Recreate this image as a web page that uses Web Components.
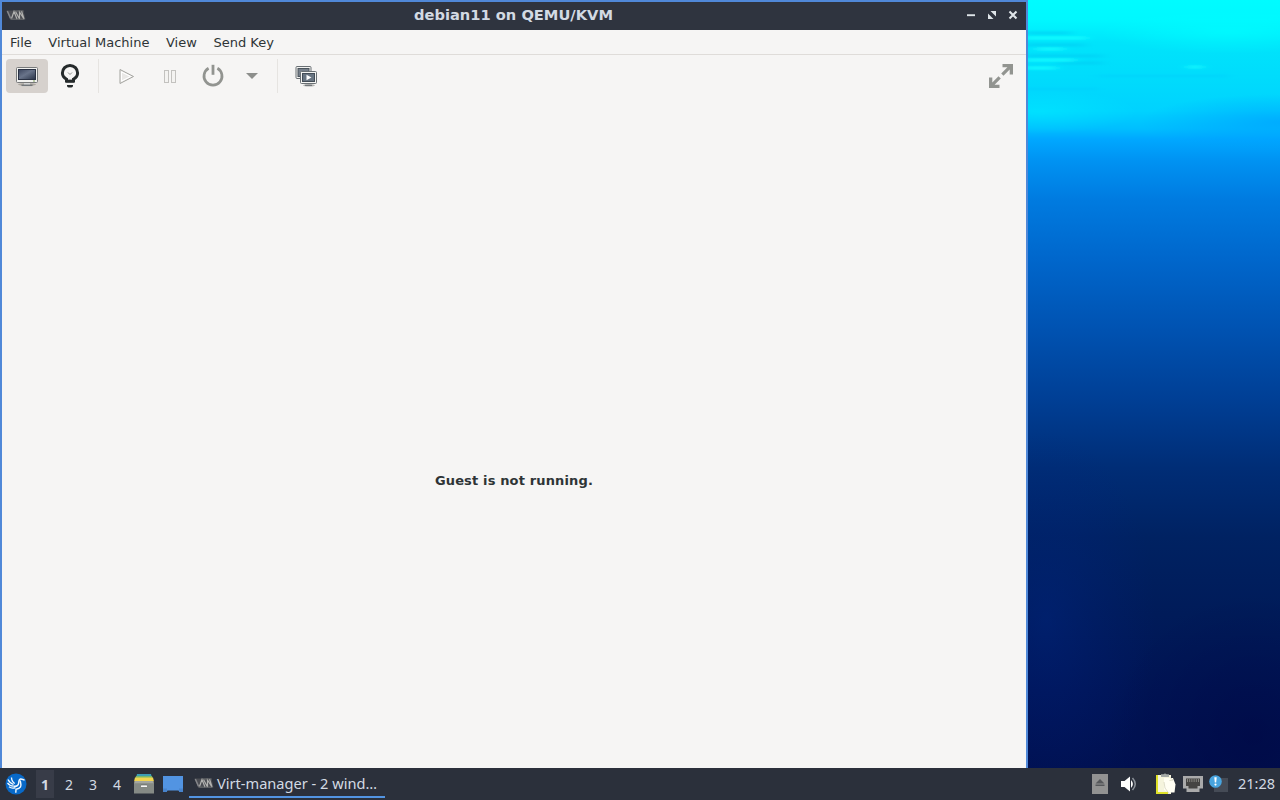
<!DOCTYPE html>
<html lang="en">
<head>
<meta charset="utf-8">
<title>debian11 on QEMU/KVM</title>
<style>
    html, body{
        margin: 0;
        width: 100%;
        height: 100%;
        overflow: hidden;
        font-family: "DejaVu Sans", sans-serif;
    }
</style>
</head>
<body>
<app-desktop>
    <app-window slot="window" label="debian11 on QEMU/KVM">
        <menu-bar slot="menu">
            <menu-item>File</menu-item>
            <menu-item>Virtual Machine</menu-item>
            <menu-item>View</menu-item>
            <menu-item>Send Key</menu-item>
        </menu-bar>
        <tool-bar slot="tools">
            <tool-button active style="--w:42px"><ui-icon name="monitor"></ui-icon></tool-button>
            <tool-button style="--w:44px"><ui-icon name="bulb"></ui-icon></tool-button>
            <tool-divider></tool-divider>
            <tool-button style="--w:44px"><ui-icon name="play"></ui-icon></tool-button>
            <tool-button style="--w:42px"><ui-icon name="pause"></ui-icon></tool-button>
            <tool-button style="--w:44px"><ui-icon name="power"></ui-icon></tool-button>
            <tool-button style="--w:34px"><ui-icon name="down"></ui-icon></tool-button>
            <tool-divider style="margin-left:8px"></tool-divider>
            <tool-button style="--w:44px"><ui-icon name="snapshots"></ui-icon></tool-button>
            <tool-button slot="end" style="--w:42px"><ui-icon name="expand"></ui-icon></tool-button>
        </tool-bar>
        <guest-status>Guest is not running.</guest-status>
    </app-window>
    <wall-paper slot="wallpaper"></wall-paper>
    <task-bar slot="panel"></task-bar>
</app-desktop>

<script>
const icons = {
    virt: [20, 12, `
        <path d="M.5 1.500h17l2 9H4.300z" fill="#4a4c52"/>
        <path d="M1.300 2 4.600 9.500" fill="none" stroke="#85868a" stroke-width="1.500"/>
        <path d="M5.500 9.500 8 2.500l3 7.500M9.500 2.500l4 7.500V3l4.500 7M15.500 2l2.500 8" fill="none" stroke="#b2b2b0" stroke-width="1.200"/>
        <path d="M8 2h9.500M4.500 10.200h14" stroke="#77787a" stroke-width=".8"/>`],
    monitor: [24, 24, `
        <defs><linearGradient id="scr" x2="1" y2="1"><stop stop-color="#3c465e"/><stop offset=".45" stop-color="#69748a"/><stop offset="1" stop-color="#283246"/></linearGradient></defs>
        <ellipse cx="12" cy="20.500" rx="9" ry="1.400" fill="#aaa69f"/>
        <rect x="1.500" y="3.500" width="21" height="15" rx="1" fill="#f1f1ef" stroke="#77797a"/>
        <rect x="3.500" y="5.500" width="17" height="10" fill="url(#scr)" stroke="#293143"/>
        <path d="M9 19h6v2H9z" fill="#d4d5d5"/><path d="M6.500 21.300h11" stroke="#73777b" stroke-width="1.500"/>
        <path d="M18 17h2" stroke="#7c9c5a"/>`],
    bulb: [24, 26, `
        <path d="M8.500 17.700v-1.500C6 14.700 4.400 12.700 4.400 10a7.600 7.600 0 0 1 15.200 0c0 2.700-1.600 4.700-4.100 6.200v1.500z" fill="none" stroke="#252a2b" stroke-width="3"/>
        <path d="m10 9.500 2 2 2-2" fill="none" stroke="#8b8d8b" stroke-width="1"/><path d="M10 14.500h4v2h-4z" fill="#f6f5f4"/>
        <path d="M7.500 18h9v1.700h-9zM9 22h6v.7q0 1.800-1.600 1.800h-2.800Q9 24.500 9 22.700z" fill="#252a2b"/>`],
    play: [24, 24, `
        <path d="m5 5.500 13.500 7L5 19.500z" fill="#f4f3f1" stroke="#a3a39f" stroke-linejoin="round"/>
        <path d="m6.500 8 9 4.500-9 4.500z" fill="#e9e8e6" stroke="#fff"/>`],
    pause: [24, 24, `
        <rect x="6.500" y="6.500" width="4" height="12" fill="#f4f3f1" stroke="#c3c2bf"/><rect x="13.500" y="6.500" width="4" height="12" fill="#f4f3f1" stroke="#c3c2bf"/>`],
    power: [24, 24, `
        <path d="M7.600 4.200a9 9 0 1 0 8.800 0" fill="none" stroke="#929490" stroke-width="2.700"/>
        <path d="M12 .8v10" stroke="#929490" stroke-width="2.800"/>`],
    down: [14, 8, `<path d="M1 1h12L7 7z" fill="#8d8f8c"/>`],
    snapshots: [24, 24, `
        <ellipse cx="15" cy="21.300" rx="6" ry="1.300" fill="#b3b4b2"/>
        <rect x="2" y="2.500" width="15" height="12" rx="1" fill="#f2f2f0" stroke="#6a7074"/>
        <rect x="4" y="4.500" width="11" height="8" fill="#77808b" stroke="#4c555d"/>
        <rect x="6.500" y="7.500" width="16" height="12" rx="1" fill="#f5f5f3" stroke="#6a7074"/>
        <rect x="8.500" y="9.500" width="12" height="8" fill="#697582" stroke="#434d57"/>
        <path d="m12.500 10.800 5 2.700-5 2.700z" fill="#fff"/><path d="M11 21.300h7" stroke="#646b70"/>`],
    expand: [24, 24, `
        <path d="M13.500 0H24v10.500h-3.300V5.600l-6.200 6.200-2.300-2.300 6.200-6.200h-4.900zM10.500 24H0V13.500h3.300v4.900l6.200-6.200 2.300 2.300-6.200 6.200h4.900z" fill="#929490"/>`],
    minimize: [10, 10, `<path d="M1 5.200h8" stroke="#dfe5e9" stroke-width="1.900"/>`],
    maximize: [10, 10, `<path d="M3.500 1H9v5.500zM1 3.500V9h5.500z" fill="#dfe5e9"/>`],
    close: [10, 10, `<path d="m1.500 1.500 7 7m0-7-7 7" stroke="#dfe5e9" stroke-width="2.100"/>`],
    lubuntu: [22, 22, `
        <circle cx="11" cy="11" r="10.500" fill="#0869c8"/>
        <path d="M3 6.500C4 9 6 10.300 8.500 11.500M2.500 9.800c1.500 2.300 3.300 3.200 6 3.400M4 13.800c2 1.500 4 1.700 6.500.8M6.500 4.500c0 2.500 1 4.500 3.300 6" fill="none" stroke="#f5faff" stroke-width="1.300"/>
        <path d="M8.500 13c3 .8 5-.5 5.200-3 .2-2.200.2-3.800 1.800-4.100 1.500-.2 2.500.7 4 1.300" fill="none" stroke="#f5faff" stroke-width="1.500"/>
        <path d="M15.300 7.500c0 2.500 1.500 4 .2 6.300-1 1.800-2.700 2.200-4.500 2.500l-.2 3.500" fill="none" stroke="#f5faff" stroke-width="1.400"/>`],
    files: [22, 22, `
        <path d="M4 1h14l1 4H3z" fill="#3d9eb4"/><path d="M3 3h16l1 4H2z" fill="#79b86a"/><path d="M2 4.500h18l1 4H1z" fill="#f2d44f"/>
        <path d="M2 8h18l1 2v10.500H1V10z" fill="#858a85"/><path d="M2 8h18l.8 2.200H1.200z" fill="#a2a6a1"/>
        <rect x="7.500" y="12" width="7" height="2.500" rx="1" fill="#f6f6f4" stroke="#5b605b" stroke-width=".6"/>`],
    showdesk: [22, 18, `<path d="M1 1h20v16h-3.500l-1-1.500h-11l-1 1.500H1z" fill="#5294e2"/><path d="M1 13.500h4L4.500 17H1zm16 0h4V17h-3.500z" fill="#4783cc"/>`],
    eject: [16, 20, `<path d="M0 0h16v20H0z" fill="#929292"/><path d="m8 5 4.500 4.500h-9zM3.500 10.500h9V12h-9z" fill="#55575a"/>`],
    sound: [18, 18, `
        <path d="M1 6h3.500L10 1.500v15L4.500 12H1z" fill="#fff"/><path d="M11 5q3.800 4 0 8z" fill="#fff"/>
        <path d="M12.500 3q5.500 6 0 12" fill="none" stroke="#8b9198" stroke-width="1.500"/>`],
    clipboard: [22, 22, `
        <path d="M1 2h15v19H1z" fill="#f5f4dd"/><path d="M1 2h2v17H1zm0 17h12v2H1z" fill="#dfe128"/>
        <path d="M6 1.300h2.500Q10-.5 11.500 1.300H14V4H6z" fill="#a3a8a6"/>
        <path d="M9 5h9l2.500 6.500-1 8H14L9 17z" fill="#fffef3"/><path d="m15 4.500 3 2.500-3.500.5M9 9l1 6 4 5.500" fill="none" stroke="#d7d6bf" stroke-width=".8"/>`],
    network: [20, 18, `
        <path d="M0 1h20v12.500h-3.500V17h-13v-3.500H0z" fill="#aaaaaa"/><path d="M3 3.500h14V11h-2.500v2.500h-9V11H3z" fill="#454442"/>
        <path d="M4.500 4v3m2.200-3v3m2.200-3v3m2.200-3v3m2.200-3v3m2.200-3v3" stroke="#97968f" stroke-width=".8"/>`],
    notify: [20, 18, `
        <path d="M8 3h11v14H5v-5z" fill="#454b56"/><circle cx="6.500" cy="6.500" r="6.300" fill="#48a4df"/>
        <path d="M5.300 2.200h2.400l-.5 5.300H5.800z" fill="#fff"/><circle cx="6.500" cy="9.600" r="1.100" fill="#fff"/>`]
};

const define = (tag, html, setup) => {
    const template = document.createElement("template");
    template.innerHTML = html;
    customElements.define(tag, class extends HTMLElement{
        constructor(){
            super();
            this.attachShadow({mode: "open"});
            this.shadowRoot.appendChild(template.content.cloneNode(true));
        };
        connectedCallback(){
            if (setup) setup(this, this.shadowRoot);
        };
    });
};

define("ui-icon", `
    <style>
        :host{ display: inline-flex; flex: none; }
        svg{ display: block; }
    </style>
    <svg aria-hidden="true"></svg>
`, (el, root) => {
    const [w, h, body] = icons[el.getAttribute("name")];
    const svg = root.querySelector("svg");
    svg.setAttribute("viewBox", `0 0 ${w} ${h}`);
    svg.setAttribute("width", w);
    svg.setAttribute("height", h);
    svg.innerHTML = body;
});

define("app-desktop", `
    <style>
        :host{
            display: grid;
            grid-template-columns: 1028px minmax(0, 1fr);
            grid-template-rows: minmax(0, 1fr) 32px;
            width: 100vw;
            height: 100vh;
        }
        footer{ grid-column: 1 / -1; display: grid; }
        main, aside{ display: grid; min-width: 0; min-height: 0; }
    </style>
    <main><slot name="window"></slot></main>
    <aside><slot name="wallpaper"></slot></aside>
    <footer><slot name="panel"></slot></footer>
`);

define("app-window", `
    <style>
        :host{
            display: flex;
            flex-direction: column;
            box-sizing: border-box;
            border: 2px solid #5088d8;
            border-bottom: 0;
            background: #f6f5f4;
            color: #2e3436;
        }
        header{
            display: grid;
            grid-template-columns: 60px 1fr 61px;
            align-items: center;
            height: 28px;
            background: #2f343f;
            color: #d3dae3;
        }
        header > ui-icon{ padding: 0 0 2px 4px; }
        h1{
            margin: 0;
            font-size: 14.667px;
            line-height: 26px;
            text-align: center;
            padding-bottom: 2px;
            white-space: nowrap;
        }
        nav{ display: flex; gap: 11px; justify-content: flex-end; padding: 0 8px 2px 0; }
        section{ flex: 1; display: grid; }
    </style>
    <header>
        <ui-icon name="virt"></ui-icon>
        <h1></h1>
        <nav>
            <ui-icon name="minimize"></ui-icon>
            <ui-icon name="maximize"></ui-icon>
            <ui-icon name="close"></ui-icon>
        </nav>
    </header>
    <slot name="menu"></slot>
    <slot name="tools"></slot>
    <section><slot></slot></section>
`, (el, root) => {
    root.querySelector("h1").textContent = el.getAttribute("label");
});

define("menu-bar", `
    <style>
        :host{
            display: flex;
            box-sizing: border-box;
            height: 25px;
            border-bottom: 1px solid #dfdcd9;
        }
    </style>
    <slot></slot>
`);

define("menu-item", `
    <style>
        :host{ display: block; padding: 0 8.600px 0 8px; font-size: 13px; line-height: 26px; white-space: nowrap; }
    </style>
    <slot></slot>
`);

define("tool-bar", `
    <style>
        :host{ display: flex; align-items: center; height: 42px; padding: 0 4px; }
        .space{ flex: 1; }
    </style>
    <slot></slot>
    <div class="space"></div>
    <slot name="end"></slot>
`);

define("tool-button", `
    <style>
        :host{
            display: flex;
            align-items: center;
            justify-content: center;
            box-sizing: border-box;
            width: var(--w);
            height: 34px;
            border-radius: 4px;
        }
        :host([active]){ background: #d6d1cd; }
    </style>
    <slot></slot>
`);

define("tool-divider", `
    <style>
        :host{ display: block; width: 1px; height: 34px; margin: 0 6px; background: #e6e4e1; }
    </style>
`);

define("guest-status", `
    <style>
        :host{
            display: grid;
            place-items: center;
            box-sizing: border-box;
            padding-top: 96px;
            font-size: 13px;
            font-weight: bold;
            letter-spacing: .15px;
        }
    </style>
    <span><slot></slot></span>
`);

define("wall-paper", `
    <style>
        :host{ display: block; min-height: 0; }
        svg{ display: block; width: 100%; height: 100%; }
    </style>
    <svg viewBox="0 0 252 768" preserveAspectRatio="none">
        <defs>
            <linearGradient id="sea" x2="0" y2="1">
                <stop stop-color="#00fcff"/>
                <stop offset=".025" stop-color="#00f8ff"/>
                <stop offset=".055" stop-color="#00e4fb"/>
                <stop offset=".1" stop-color="#00dcfc"/>
                <stop offset=".145" stop-color="#00d2ff"/>
                <stop offset=".168" stop-color="#00beff"/>
                <stop offset=".181" stop-color="#00a8ff"/>
                <stop offset=".21" stop-color="#0092f2"/>
                <stop offset=".26" stop-color="#007be0"/>
                <stop offset=".34" stop-color="#0066cb"/>
                <stop offset=".43" stop-color="#0052b1"/>
                <stop offset=".52" stop-color="#003f95"/>
                <stop offset=".61" stop-color="#002d76"/>
                <stop offset=".7" stop-color="#002262"/>
                <stop offset=".8" stop-color="#001b59"/>
                <stop offset=".9" stop-color="#001455"/>
                <stop offset="1" stop-color="#001050"/>
            </linearGradient>
            <radialGradient id="glow"><stop stop-color="#00278a" stop-opacity=".4"/><stop offset="1" stop-color="#002080" stop-opacity="0"/></radialGradient>
            <radialGradient id="deep"><stop stop-color="#000038" stop-opacity=".35"/><stop offset="1" stop-color="#000038" stop-opacity="0"/></radialGradient>
            <radialGradient id="shade"><stop stop-color="#009cff" stop-opacity=".6"/><stop offset="1" stop-color="#009cff" stop-opacity="0"/></radialGradient>
            <radialGradient id="light"><stop stop-color="#00ffff" stop-opacity=".65"/><stop offset="1" stop-color="#00ffff" stop-opacity="0"/></radialGradient>
            <filter id="soft" x="-20%" y="-300%" width="140%" height="700%"><feGaussianBlur stdDeviation="6 1.2"/></filter>
        </defs>
        <rect width="252" height="768" fill="url(#sea)"/>
        <ellipse cx="200" cy="32" rx="130" ry="22" fill="url(#light)"/>
        <ellipse cx="10" cy="112" rx="100" ry="22" fill="url(#light)" opacity=".5"/>
        <ellipse cx="252" cy="122" rx="140" ry="28" fill="url(#shade)"/>
        <g filter="url(#soft)">
            <path d="M-5 33h48M-5 45h62M-5 56h80M30 63h45" stroke="#00ccf4" stroke-width="3" opacity=".6"/>
            <path d="M-5 38h63M9 49h26M-5 60h51M-5 68h33M160 67h14" stroke="#1cffff" stroke-width="3" opacity=".85"/>
            <path d="M70 76h130M-5 89h75" stroke="#00d0fb" stroke-width="3" opacity=".5"/>
        </g>
        <ellipse cx="18" cy="620" rx="110" ry="190" fill="url(#glow)"/>
        <ellipse cx="225" cy="735" rx="145" ry="140" fill="url(#deep)"/>
    </svg>
`);

define("work-space", `
    <style>
        :host{ display: grid; place-items: center; width: 24px; height: 32px; font-size: 14px; }
        span{ display: grid; place-items: center; width: 18px; height: 28px; }
        :host([current]) span{ background: #383c48; font-weight: bold; }
    </style>
    <span><slot></slot></span>
`);

define("task-bar", `
    <style>
        :host{
            display: flex;
            align-items: center;
            height: 32px;
            background: #2b303b;
            color: #d3dae3;
            font-family: "Noto Sans", sans-serif;
            white-space: nowrap;
        }
        .start{ padding: 0 5px 0 5px; }
        .pager{ display: flex; margin-left: 1px; }
        .launch{ display: flex; align-items: center; gap: 7px; margin-left: 4px; }
        .task{
            display: flex;
            align-items: center;
            box-sizing: border-box;
            width: 196px;
            height: 28px;
            margin: 0 0 0 5px;
            padding: 0 0 1px 5px;
            border-bottom: 2px solid #5294e2;
            font-size: 14.600px;
        }
        .task span{ margin-left: 3px; }
        .space{ flex: 1; }
        .tray{ display: flex; align-items: center; }
        time{ width: 38px; margin: 0 4px 2px 9px; font-size: 14.500px; }
    </style>
    <ui-icon class="start" name="lubuntu"></ui-icon>
    <div class="pager">
        <work-space current>1</work-space>
        <work-space>2</work-space>
        <work-space>3</work-space>
        <work-space>4</work-space>
    </div>
    <div class="launch">
        <ui-icon name="files"></ui-icon>
        <ui-icon name="showdesk"></ui-icon>
    </div>
    <div class="task"><ui-icon name="virt"></ui-icon><span>Virt-manager - 2 wind…</span></div>
    <div class="space"></div>
    <div class="tray">
        <ui-icon name="eject"></ui-icon>
        <ui-icon name="sound" style="margin-left:12px"></ui-icon>
        <ui-icon name="clipboard" style="margin-left:17px"></ui-icon>
        <ui-icon name="network" style="margin-left:6px"></ui-icon>
        <ui-icon name="notify" style="margin-left:6px"></ui-icon>
    </div>
    <time>21:28</time>
`);
</script>
</body>
</html>
